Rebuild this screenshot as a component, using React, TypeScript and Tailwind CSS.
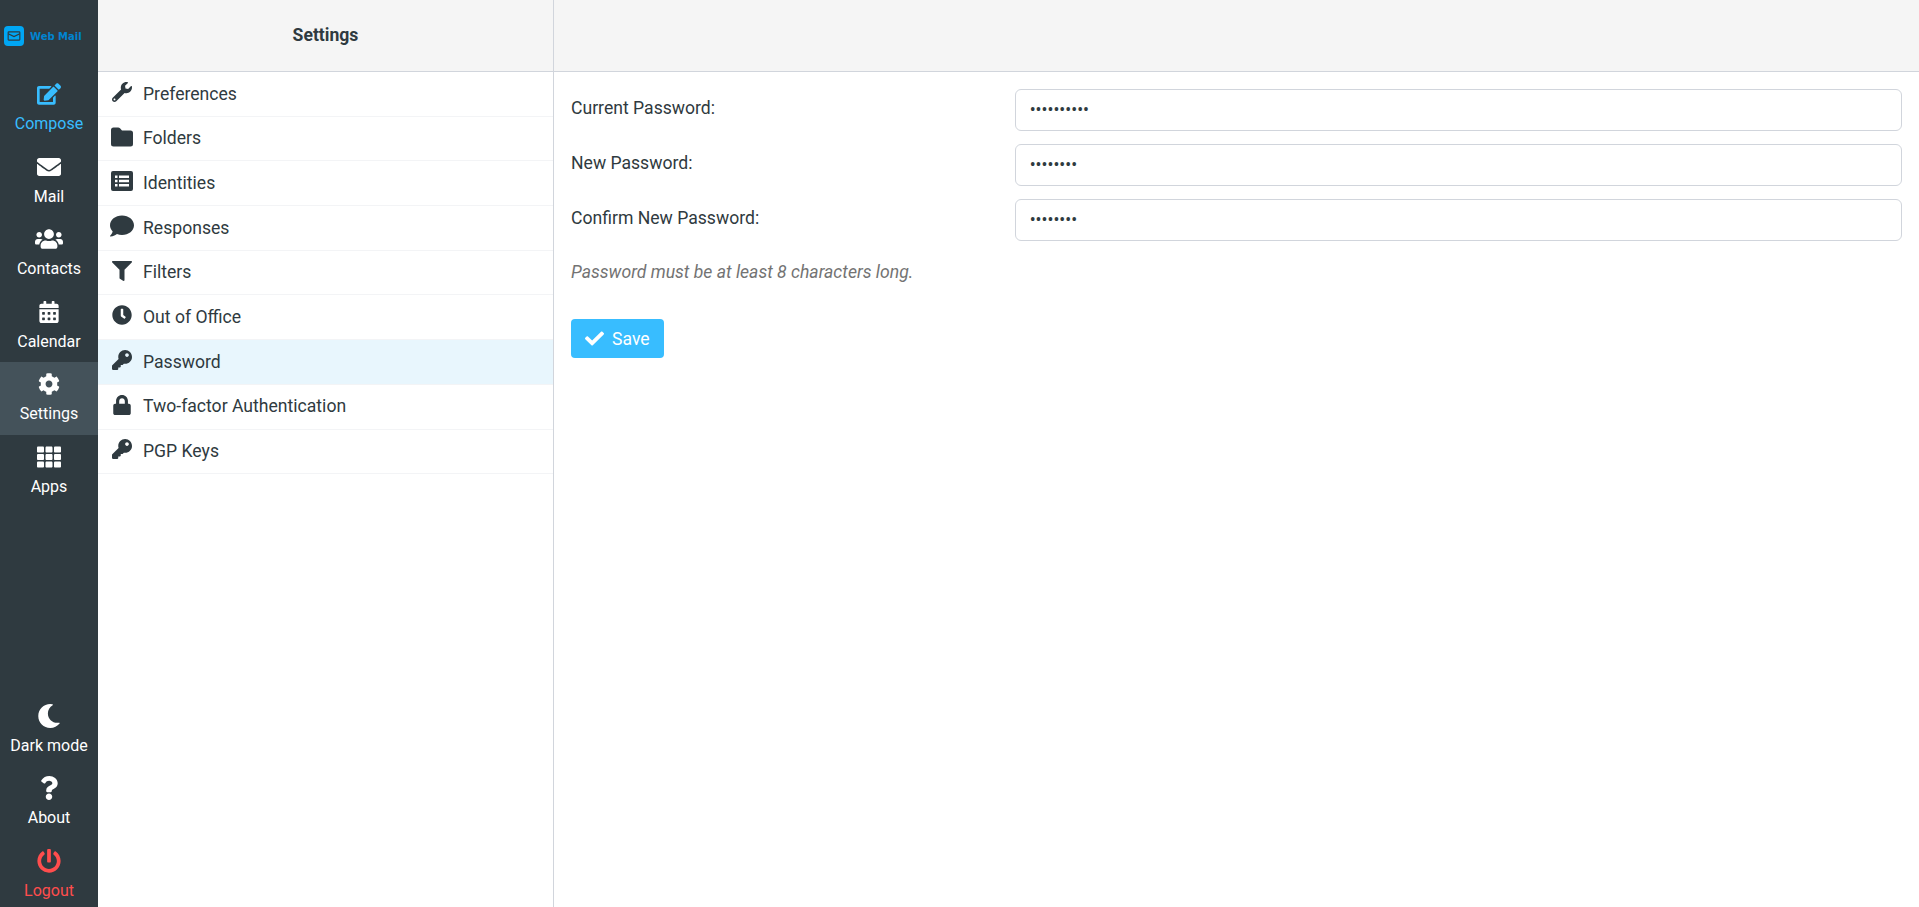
import {
  FaCalendarAlt,
  FaCheck,
  FaClock,
  FaCog,
  FaComment,
  FaEdit,
  FaEnvelope,
  FaFilter,
  FaKey,
  FaLock,
  FaMoon,
  FaPowerOff,
  FaQuestion,
  FaTh,
  FaUsers,
  FaWrench,
} from 'react-icons/fa';
import type { ComponentType } from 'react';
import type { IconType } from 'react-icons';

const font = { fontFamily: 'Roboto, "Liberation Sans", sans-serif' };

type NavItem = { label: string; icon: IconType; size: string; active?: boolean; color?: string };

// el paquete los trae más bajos que en la captura, por eso van dibujados
function FolderIcon({ className }: { className?: string }) {
  return (
    <svg viewBox="0 0 22 19" fill="currentColor" className={className}>
      <path d="M2.5 0h4.6c.8 0 1.4.3 1.9.8L11 3h8.5A2.5 2.5 0 0 1 22 5.500v11a2.500 2.500 0 0 1-2.500 2.500h-17A2.500 2.500 0 0 1 0 16.500v-14A2.500 2.500 0 0 1 2.500 0z" />
    </svg>
  );
}

function ListAltIcon({ className }: { className?: string }) {
  return (
    <svg viewBox="0 0 22 20" fill="currentColor" fillRule="evenodd" className={className}>
      <path d="M2 0h18a2 2 0 0 1 2 2v16a2 2 0 0 1-2 2H2a2 2 0 0 1-2-2V2a2 2 0 0 1 2-2zM4 4.500v2.500h2.500V4.500zM8 4.500v2.500h10V4.500zM4 8.700v2.600h2.500V8.700zM8 8.700v2.600h10V8.700zM4 13v2.500h2.500V13zM8 13v2.500h10V13z" />
    </svg>
  );
}

const topNav: NavItem[] = [
  { label: 'Compose', icon: FaEdit, size: 'size-6', color: 'text-[#38bdff]' },
  { label: 'Mail', icon: FaEnvelope, size: 'size-6' },
  { label: 'Contacts', icon: FaUsers, size: 'size-7' },
  { label: 'Calendar', icon: FaCalendarAlt, size: 'size-5.5' },
  { label: 'Settings', icon: FaCog, size: 'size-5.5', active: true },
  { label: 'Apps', icon: FaTh, size: 'size-6' },
];

const bottomNav: NavItem[] = [
  { label: 'Dark mode', icon: FaMoon, size: 'size-6' },
  { label: 'About', icon: FaQuestion, size: 'size-6' },
  { label: 'Logout', icon: FaPowerOff, size: 'size-6', color: 'text-[#ff4d4d]' },
];

const settingsItems: {
  label: string;
  icon: ComponentType<{ className?: string }>;
  size: string;
  active?: boolean;
}[] = [
  { label: 'Preferences', icon: FaWrench, size: 'size-5' },
  { label: 'Folders', icon: FolderIcon, size: 'w-5.5 h-5' },
  { label: 'Identities', icon: ListAltIcon, size: 'w-5.5 h-5' },
  { label: 'Responses', icon: FaComment, size: 'size-6' },
  { label: 'Filters', icon: FaFilter, size: 'size-5' },
  { label: 'Out of Office', icon: FaClock, size: 'size-5' },
  { label: 'Password', icon: FaKey, size: 'size-5', active: true },
  { label: 'Two-factor Authentication', icon: FaLock, size: 'size-5' },
  { label: 'PGP Keys', icon: FaKey, size: 'size-5' },
];

const passwordFields = [
  { label: 'Current Password:', value: '1234567890' },
  { label: 'New Password:', value: '12345678' },
  { label: 'Confirm New Password:', value: '12345678' },
];

function SideButton({ item }: { item: NavItem }) {
  const Icon = item.icon;
  return (
    <a
      className={`flex h-[72.5px] flex-col items-center gap-1.5 pt-2.5 text-base ${item.color ?? 'text-white'} ${
        item.active ? 'bg-[#44525a]' : ''
      }`}
    >
      <span className="flex h-6 items-center justify-center">
        <Icon className={item.size} />
      </span>
      <span className="leading-6">{item.label}</span>
    </a>
  );
}

export default function App() {
  return (
    <div className="flex h-screen overflow-hidden bg-white text-[1.1rem] text-[#2f3a40]" style={font}>
      {/* barra lateral */}
      <aside className="flex w-24.5 shrink-0 flex-col bg-[#2f3a40]">
        <div className="flex h-18 items-center gap-1.5 pl-1">
          <span className="flex size-5 items-center justify-center rounded-sm bg-sky-500">
            <LogoEnvelope />
          </span>
          <span className="text-[10px] font-bold text-sky-600" style={{ fontFamily: '"DejaVu Sans", sans-serif' }}>
            Web Mail
          </span>
        </div>
        {topNav.map(item => (
          <SideButton key={item.label} item={item} />
        ))}
        <div className="-mb-1 mt-auto">
          {bottomNav.map(item => (
            <SideButton key={item.label} item={item} />
          ))}
        </div>
      </aside>

      {/* lista de ajustes */}
      <section className="w-114 shrink-0 border-r border-gray-300">
        <header className="flex h-18 items-center justify-center border-b border-gray-300 bg-neutral-100 font-bold">
          Settings
        </header>
        <ul>
          {settingsItems.map(({ label, icon: Icon, size, active }) => (
            <li
              key={label}
              className={`flex h-[44.7px] items-center gap-2.5 border-b border-gray-100 pl-3.25 ${active ? 'bg-[#e8f6fd]' : ''}`}
            >
              <span className="flex w-5.5 justify-center pb-1">
                <Icon className={`${size} shrink-0`} />
              </span>
              <span>{label}</span>
            </li>
          ))}
        </ul>
      </section>

      {/* formulario */}
      <main className="flex-1">
        <div className="h-18 border-b border-gray-300 bg-neutral-100" />
        <form className="flex flex-col px-4.25 pt-4.25">
          <div className="flex flex-col gap-3.25">
            {passwordFields.map(field => (
              <div key={field.label} className="grid grid-cols-3">
                <label className="pt-1.5">{field.label}</label>
                <input
                  type="password"
                  readOnly
                  value={field.value}
                  className="col-span-2 h-10.5 rounded-md border border-gray-300 px-3.5 outline-none"
                />
              </div>
            ))}
          </div>
          <p className="mt-4.5 italic text-neutral-500">Password must be at least 8 characters long.</p>
          <div className="mt-8.5">
            <button type="button" className="flex h-9.75 items-center gap-2 rounded bg-[#38bdff] px-3.5 text-white">
              <FaCheck className="size-4.75" />
              Save
            </button>
          </div>
        </form>
      </main>
    </div>
  );
}

// sobre del logo, es de trazo y no existe como tal en el paquete
function LogoEnvelope() {
  return (
    <svg viewBox="0 0 24 24" className="size-3.5 text-[#2f3a40]" fill="none" stroke="currentColor" strokeWidth="2">
      <rect x="2" y="5" width="20" height="14" rx="1" />
      <path d="M2 8l10 5 10-5" />
    </svg>
  );
}
